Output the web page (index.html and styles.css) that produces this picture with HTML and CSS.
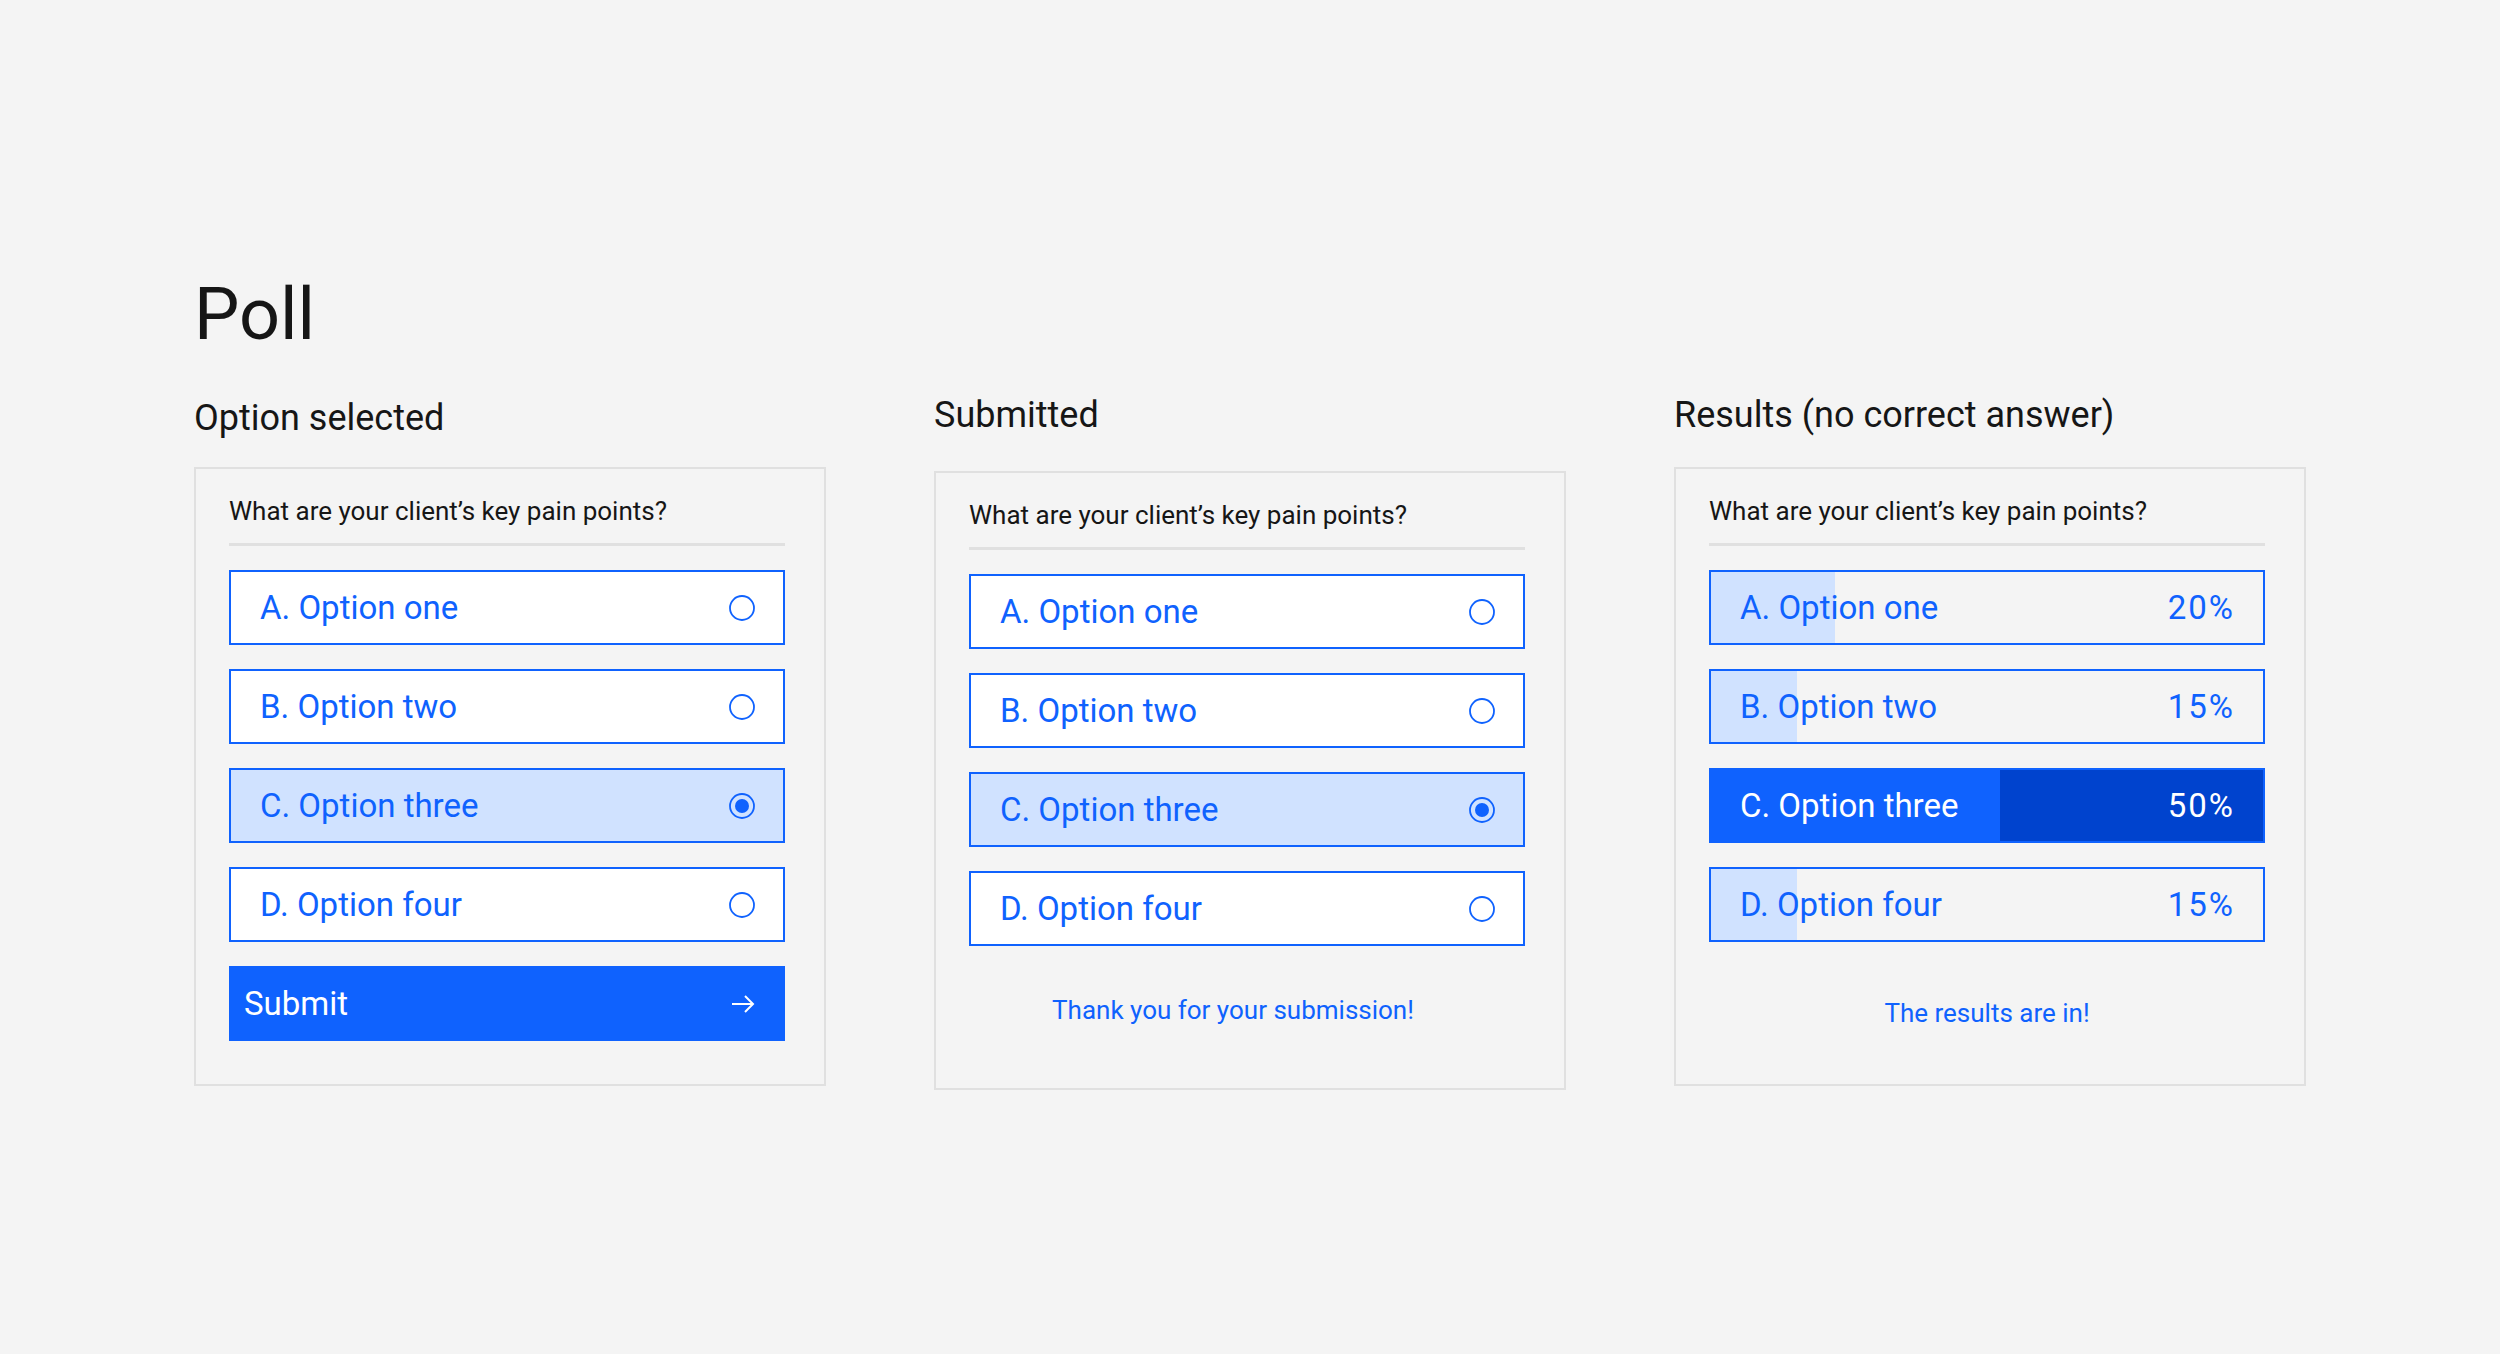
FILE: index.html
```html
<!DOCTYPE html>
<html lang="en">
<head>
<meta charset="utf-8">
<title>Poll</title>
<link rel="stylesheet" href="styles.css">
</head>
<body>
<main class="page">
  <h1 class="title">Poll</h1>
  <div class="columns">
    <section class="column">
      <h2 class="column__title column__title--low">Option selected</h2>
      <div class="card">
        <p class="question">What are your client’s key pain points?</p>
        <ul class="options">
          <li class="option"><span>A. Option one</span><svg class="radio" viewBox="0 0 26 26"><circle cx="13" cy="13" r="12"/></svg></li>
          <li class="option"><span>B. Option two</span><svg class="radio" viewBox="0 0 26 26"><circle cx="13" cy="13" r="12"/></svg></li>
          <li class="option option--selected"><span>C. Option three</span><svg class="radio" viewBox="0 0 26 26"><circle cx="13" cy="13" r="12"/><circle class="radio__dot" cx="13" cy="13" r="7"/></svg></li>
          <li class="option"><span>D. Option four</span><svg class="radio" viewBox="0 0 26 26"><circle cx="13" cy="13" r="12"/></svg></li>
        </ul>
        <button class="submit" type="button"><span>Submit</span><svg class="submit__arrow" viewBox="0 0 24 20"><path d="M1 10H22M14 2l8 8-8 8"/></svg></button>
      </div>
    </section>

    <section class="column">
      <h2 class="column__title">Submitted</h2>
      <div class="card card--low">
        <p class="question">What are your client’s key pain points?</p>
        <ul class="options">
          <li class="option"><span>A. Option one</span><svg class="radio" viewBox="0 0 26 26"><circle cx="13" cy="13" r="12"/></svg></li>
          <li class="option"><span>B. Option two</span><svg class="radio" viewBox="0 0 26 26"><circle cx="13" cy="13" r="12"/></svg></li>
          <li class="option option--selected"><span>C. Option three</span><svg class="radio" viewBox="0 0 26 26"><circle cx="13" cy="13" r="12"/><circle class="radio__dot" cx="13" cy="13" r="7"/></svg></li>
          <li class="option"><span>D. Option four</span><svg class="radio" viewBox="0 0 26 26"><circle cx="13" cy="13" r="12"/></svg></li>
        </ul>
        <p class="note note--submitted">Thank you for your submission!</p>
      </div>
    </section>

    <section class="column">
      <h2 class="column__title">Results (no correct answer)</h2>
      <div class="card">
        <p class="question">What are your client’s key pain points?</p>
        <ul class="options">
          <li class="option result"><div class="result__fill" style="width:124px"></div><span>A. Option one</span><span class="result__pct">20%</span></li>
          <li class="option result"><div class="result__fill" style="width:86px"></div><span>B. Option two</span><span class="result__pct">15%</span></li>
          <li class="option result result--top"><div class="result__fill" style="width:289px"></div><span>C. Option three</span><span class="result__pct">50%</span></li>
          <li class="option result"><div class="result__fill" style="width:86px"></div><span>D. Option four</span><span class="result__pct">15%</span></li>
        </ul>
        <p class="note">The results are in!</p>
      </div>
    </section>
  </div>
</main>
</body>
</html>
```

FILE: styles.css
```css
html, body {
  margin: 0;
  background: #f4f4f4;
}

body {
  font-family: Roboto, "Liberation Sans", sans-serif;
  color: #161616;
}

.page {
  padding: 279px 0 0 194px;
}

.title {
  margin: 0;
  font-size: 72px;
  line-height: 72px;
  font-weight: 400;
}

.columns {
  display: flex;
  align-items: flex-start;
  gap: 108px;
  margin-top: 42px;
}

.column {
  width: 632px;
  display: flex;
  flex-direction: column;
}

.column__title {
  margin: 0 0 30px;
  font-size: 36px;
  line-height: 44px;
  font-weight: 400;
}

.column__title--low {
  padding-top: 3px;
  margin-bottom: 27px;
}

.card {
  box-sizing: border-box;
  display: flex;
  flex-direction: column;
  border: 2px solid #e0e0e0;
  padding: 26px 39px 43px 33px;
}

.card--low {
  margin-top: 4px;
}

.question {
  margin: 0 0 24px;
  padding-bottom: 16px;
  border-bottom: 3px solid #e0e0e0;
  font-size: 26px;
  line-height: 32px;
}

.options {
  list-style: none;
  margin: 0;
  padding: 0;
  display: flex;
  flex-direction: column;
  gap: 24px;
}

.option {
  box-sizing: border-box;
  position: relative;
  height: 75px;
  display: flex;
  align-items: center;
  justify-content: space-between;
  padding: 0 28px 0 29px;
  border: 2px solid #0f62fe;
  background: #ffffff;
  color: #0f62fe;
  font-size: 33px;
}

.option--selected {
  background: #d0e2ff;
}

.radio {
  width: 26px;
  height: 26px;
  fill: none;
  stroke: #0f62fe;
  stroke-width: 1.8;
}

.radio__dot {
  fill: #0f62fe;
  stroke: none;
}

.submit {
  box-sizing: border-box;
  margin-top: 24px;
  height: 75px;
  display: flex;
  align-items: center;
  justify-content: space-between;
  padding: 0 30px 0 15px;
  border: 0;
  background: #0f62fe;
  color: #ffffff;
  font-family: inherit;
  font-size: 33px;
}

.submit__arrow {
  width: 24px;
  height: 20px;
  fill: none;
  stroke: #ffffff;
  stroke-width: 2;
}

.note {
  box-sizing: border-box;
  height: 99px;
  margin: 0;
  padding-top: 42px;
  display: flex;
  align-items: center;
  justify-content: center;
  color: #0f62fe;
  font-size: 26px;
}

.note--submitted {
  padding-top: 28px;
  padding-right: 28px;
}

.result {
  background: #f4f4f4;
  padding: 0 28px 0 29px;
}

.result span {
  position: relative;
}

.result .result__pct {
  letter-spacing: 2px;
}

.result__fill {
  position: absolute;
  left: 0;
  top: 0;
  bottom: 0;
  background: #d0e2ff;
}

.result--top {
  background: #0043ce;
  color: #ffffff;
}

.result--top .result__fill {
  background: #0f62fe;
}
```
